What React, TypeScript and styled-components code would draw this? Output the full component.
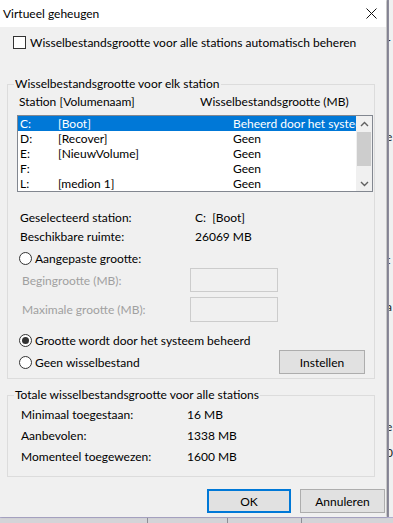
import React from 'react';
import styled, { createGlobalStyle } from 'styled-components';

const Global = createGlobalStyle`
  html, body { margin: 0; padding: 0; }
  body {
    width: 393px; height: 523px; overflow: hidden;
    background: #f0f0f0;
    font-family: Lato, "Noto Sans", sans-serif;
    font-size: 12px; color: #000;
  }
  * { box-sizing: border-box; }
`;

const Screen = styled.div`
  display: flex; flex-direction: column;
  width: 393px; height: 523px;
`;
const Top = styled.div`
  display: flex; height: 517px;
`;
const Dialog = styled.div`
  width: 386px; flex: none;
  display: flex; flex-direction: column;
  background: #f0f0f0;
  box-shadow: 1px 0 2px rgba(0,0,0,0.25);
  z-index: 1;
`;
const BackWindow = styled.div`
  flex: 1; overflow: hidden;
  border-left: 2px solid #8f8e9e;
  margin-left: 1px;
  background: #f0f0f0;
  display: flex; flex-direction: column;
`;
const Frag = styled.span<{ $top: number }>`
  display: block; margin-top: ${p => p.$top}px;
  line-height: 16px; white-space: nowrap; margin-left: -3px;
  font-size: 12px; color: #222;
`;
const BottomStrip = styled.div`
  height: 6px; display: flex;
  background: #d4d4d8;
  border-top: 1px solid #b2aed0;
`;
const BottomCell = styled.div<{ $w: number }>`
  width: ${p => p.$w}px; flex: none;
  border-right: 1px solid #8e8e96;
`;

const TitleBar = styled.div`
  height: 27px; flex: none;
  background: #fff;
  display: flex; align-items: center; justify-content: space-between;
  padding: 0 9px 0 3px;
`;
const Title = styled.span`
  font-size: 12px; color: #000;
`;

const Body = styled.div`
  flex: 1;
  display: flex; flex-direction: column;
  padding: 9px 0 0 7px;
`;

const CheckRow = styled.label`
  display: flex; align-items: center; gap: 4px;
  height: 13px; padding-left: 6px;
`;
const CheckBox = styled.span`
  width: 13px; height: 13px; flex: none;
  border: 1px solid #333; background: #fff;
`;

const Group = styled.fieldset<{ $mt: number; $pb: number }>`
  margin: ${p => p.$mt}px 0 0 0;
  width: 368px;
  padding: 0 1px ${p => p.$pb}px 0;
  border: 1px solid #dcdcdc;
  min-width: 0;
`;
const Legend = styled.legend`
  margin-left: 6px; padding: 0 1px;
  line-height: 16px; font-size: 12px;
`;
const GroupInner = styled.div<{ $pl: number }>`
  display: flex; flex-direction: column;
  padding-left: ${p => p.$pl}px;
`;

const HeaderRow = styled.div`
  display: grid; grid-template-columns: 181px 1fr;
  height: 16px; line-height: 16px; margin-top: 2px; padding-left: 2px;
`;

const ListBox = styled.div`
  margin-top: 5px;
  width: 356px; height: 77px;
  border: 1px solid #828790;
  background: #fff;
  display: flex;
`;
const Rows = styled.div`
  flex: 1; min-width: 0; overflow: hidden;
  display: flex; flex-direction: column;
`;
const Row = styled.div<{ $sel?: boolean }>`
  height: 15px; line-height: 15px;
  display: grid; grid-template-columns: 38px 175px minmax(0, 1fr);
  padding-left: 2px;
  white-space: nowrap; overflow: hidden;
  background: ${p => (p.$sel ? '#0078d7' : 'transparent')};
  color: ${p => (p.$sel ? '#fff' : '#000')};
`;
const Cell = styled.span`
  overflow: hidden;
`;
const Scrollbar = styled.div`
  width: 16px; flex: none;
  background: #f0f0f0;
  display: flex; flex-direction: column; align-items: center;
`;
const ArrowBox = styled.div`
  height: 15px; width: 16px;
  display: flex; align-items: center; justify-content: center;
`;
const Track = styled.div`
  flex: 1; width: 100%;
  display: flex; flex-direction: column; padding: 0 1px;
`;
const Thumb = styled.div`
  height: 34px; margin-top: 1px;
  background: #cdcdcd;
`;

const InfoRow = styled.div<{ $mt?: number }>`
  display: grid; grid-template-columns: 175px 1fr;
  height: 19px; line-height: 19px; padding-left: 3px;
  margin-top: ${p => p.$mt ?? 0}px;
`;

const RadioRow = styled.label<{ $mt?: number }>`
  display: flex; align-items: center; gap: 3px;
  height: 20px; padding-left: 2px;
  margin-top: ${p => p.$mt ?? 0}px;
`;
const Radio = styled.span<{ $on?: boolean }>`
  width: 13px; height: 13px; flex: none; border-radius: 50%;
  border: 1px solid #333; background: #fff;
  display: flex; align-items: center; justify-content: center;
  &::after {
    content: '';
    width: 7px; height: 7px; border-radius: 50%;
    background: ${p => (p.$on ? '#333' : 'transparent')};
  }
`;

const InputRow = styled.div<{ $mt?: number; $h: number }>`
  display: grid; grid-template-columns: 168px 88px;
  align-items: center;
  height: ${p => p.$h}px; padding-left: 5px;
  margin-top: ${p => p.$mt ?? 0}px;
  color: #a0a0a0;
`;
const FakeInput = styled.div`
  height: 100%;
  border: 1px solid #cccccc;
  background: #f0f0f0;
`;

const LastRow = styled.div`
  display: flex; align-items: center; justify-content: space-between;
  height: 24px; padding-right: 8px;
`;
const Button = styled.button<{ $w: number; $default?: boolean }>`
  width: ${p => p.$w}px; height: 24px;
  font-family: inherit; font-size: 12px; color: #000;
  background: #e1e1e1;
  border: ${p => (p.$default ? '2px solid #0078d7' : '1px solid #adadad')};
  padding: 0;
`;

const TotalRow = styled.div<{ $mt?: number }>`
  display: grid; grid-template-columns: 166px 1fr;
  height: 21px; line-height: 21px;
  margin-top: ${p => p.$mt ?? 0}px;
`;

const ButtonBar = styled.div`
  display: flex; justify-content: flex-end; gap: 9px;
  margin-top: 12px; padding-right: 1px;
`;

const Chevron = ({ up }: { up?: boolean }) => (
  <svg width="9" height="6" viewBox="0 0 9 6">
    <path
      d={up ? 'M1 5 L4.5 1.5 L8 5' : 'M1 1 L4.5 4.5 L8 1'}
      fill="none"
      stroke="#606060"
      strokeWidth="1.4"
    />
  </svg>
);

const CloseIcon = () => (
  <svg width="11" height="11" viewBox="0 0 11 11">
    <path d="M0.5 0.5 L10.5 10.5 M10.5 0.5 L0.5 10.5" stroke="#111" strokeWidth="1" fill="none" />
  </svg>
);

const drives = [
  { d: 'C:', n: '[Boot]', s: 'Beheerd door het systeem', sel: true },
  { d: 'D:', n: '[Recover]', s: 'Geen' },
  { d: 'E:', n: '[NieuwVolume]', s: 'Geen' },
  { d: 'F:', n: '', s: 'Geen' },
  { d: 'L:', n: '[medion 1]', s: 'Geen' },
];

export default function App() {
  return (
    <>
      <Global />
      <Screen>
        <Top>
          <Dialog>
            <TitleBar>
              <Title>Virtueel geheugen</Title>
              <CloseIcon />
            </TitleBar>
            <Body>
              <CheckRow>
                <CheckBox />
                <span>Wisselbestandsgrootte voor alle stations automatisch beheren</span>
              </CheckRow>

              <Group $mt={27} $pb={4}>
                <Legend>Wisselbestandsgrootte voor elk station</Legend>
                <GroupInner $pl={9}>
                  <HeaderRow>
                    <span>Station [Volumenaam]</span>
                    <span>Wisselbestandsgrootte (MB)</span>
                  </HeaderRow>
                  <ListBox>
                    <Rows>
                      {drives.map(r => (
                        <Row key={r.d} $sel={r.sel}>
                          <Cell>{r.d}</Cell>
                          <Cell>{r.n}</Cell>
                          <Cell>{r.s}</Cell>
                        </Row>
                      ))}
                    </Rows>
                    <Scrollbar>
                      <ArrowBox><Chevron up /></ArrowBox>
                      <Track><Thumb /></Track>
                      <ArrowBox><Chevron /></ArrowBox>
                    </Scrollbar>
                  </ListBox>

                  <InfoRow $mt={16}>
                    <span>Geselecteerd station:</span>
                    <span>C:&nbsp; [Boot]</span>
                  </InfoRow>
                  <InfoRow>
                    <span>Beschikbare ruimte:</span>
                    <span>26069 MB</span>
                  </InfoRow>

                  <RadioRow $mt={2}>
                    <Radio />
                    <span>Aangepaste grootte:</span>
                  </RadioRow>
                  <InputRow $h={24}>
                    <span>Begingrootte (MB):</span>
                    <FakeInput />
                  </InputRow>
                  <InputRow $h={25} $mt={5}>
                    <span>Maximale grootte (MB):</span>
                    <FakeInput />
                  </InputRow>

                  <RadioRow $mt={8}>
                    <Radio $on />
                    <span>Grootte wordt door het systeem beheerd</span>
                  </RadioRow>
                  <LastRow>
                    <RadioRow>
                      <Radio />
                      <span>Geen wisselbestand</span>
                    </RadioRow>
                    <Button $w={86}>Instellen</Button>
                  </LastRow>
                </GroupInner>
              </Group>

              <Group $mt={8} $pb={9}>
                <Legend>Totale wisselbestandsgrootte voor alle stations</Legend>
                <GroupInner $pl={13}>
                  <TotalRow $mt={1}>
                    <span>Minimaal toegestaan:</span>
                    <span>16 MB</span>
                  </TotalRow>
                  <TotalRow>
                    <span>Aanbevolen:</span>
                    <span>1338 MB</span>
                  </TotalRow>
                  <TotalRow>
                    <span>Momenteel toegewezen:</span>
                    <span>1600 MB</span>
                  </TotalRow>
                </GroupInner>
              </Group>

              <ButtonBar>
                <Button $w={84} $default>OK</Button>
                <Button $w={85}>Annuleren</Button>
              </ButtonBar>
            </Body>
          </Dialog>
          <BackWindow>
            <Frag $top={34}>r</Frag>
            <Frag $top={79}>e</Frag>
            <Frag $top={107}>t</Frag>
            <Frag $top={31}>a</Frag>
            <Frag $top={104}>e</Frag>
            <Frag $top={10}>0</Frag>
          </BackWindow>
        </Top>
        <BottomStrip>
          <BottomCell $w={148} />
          <BottomCell $w={80} />
          <BottomCell $w={74} />
        </BottomStrip>
      </Screen>
    </>
  );
}
